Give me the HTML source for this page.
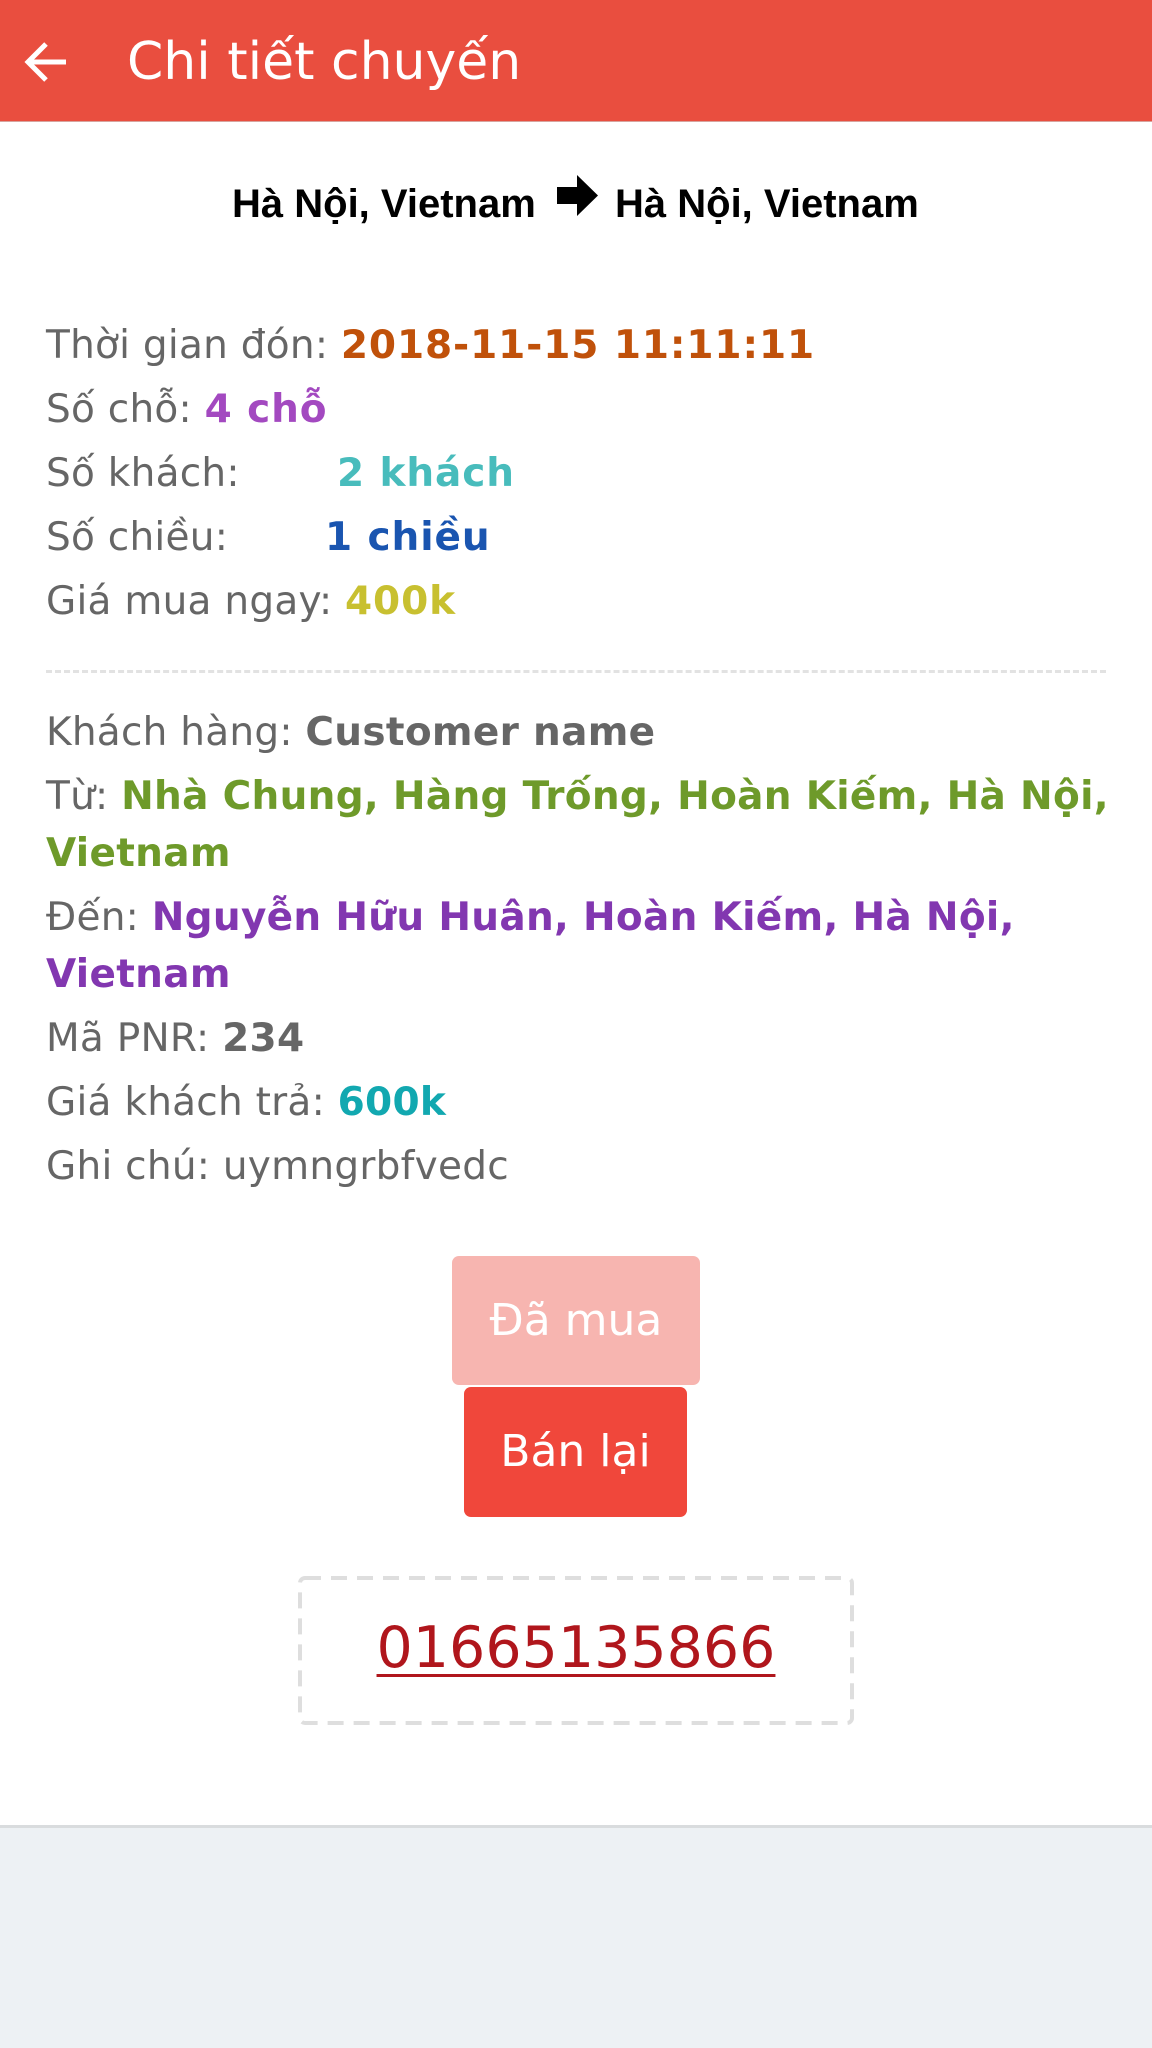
<!DOCTYPE html>
<html><head><meta charset="utf-8"><style>
*{margin:0;padding:0;box-sizing:border-box}
body{width:1152px;height:2048px;background:#edf1f4;position:relative;overflow:hidden;font-family:"DejaVu Sans","Liberation Sans",sans-serif}
.hdr{position:absolute;left:0;top:0;width:1152px;height:122px;background:#e94e3f;border-bottom:1px solid #d7a49e}
.hdr .t{position:absolute;left:127px;top:27px;font-size:52px;line-height:70px;color:#fff;white-space:nowrap}
.main{position:absolute;left:0;top:122px;width:1152px;height:1706px;background:#fff;border-bottom:3px solid #d9dcde}
.route{position:absolute;left:0;top:182px;width:1152px;font-family:"Liberation Sans",Arial,sans-serif;font-weight:bold;font-size:40px;color:#000;white-space:nowrap}
.blk{position:absolute;left:46px;width:1090px;font-size:39px;line-height:57px;color:#666;letter-spacing:0.25px}
.blk p{margin:0 0 7px;white-space:normal}
b{font-weight:bold;letter-spacing:0.9px}
.b2 b{letter-spacing:0.3px}
.dash{position:absolute;left:46px;top:670px;width:1060px;border-top:3px dashed #e2e2e2}
.btn{position:absolute;border-radius:7px;color:#fff;font-size:44px;text-align:center}
.phone{position:absolute;left:0;top:1615px;width:1152px;text-align:center;font-size:57px;color:#b0161c;text-decoration:underline;text-decoration-thickness:3px;text-underline-offset:7px}
</style></head><body>
<div class="main"></div>
<div class="hdr">
<svg style="position:absolute;left:22px;top:40px" width="48" height="44" viewBox="0 0 48 44"><path d="M44 22H6M24 4L6 22l18 18" stroke="#fff" stroke-width="5" fill="none"/></svg>
<div class="t">Chi tiết chuyến</div>
</div>
<div class="route"><span style="position:absolute;left:232px;top:0">Hà Nội, Vietnam</span>
<svg style="position:absolute;left:557px;top:-7px" width="42" height="42" viewBox="0 0 42 42"><path d="M0 12H20V0L41 20.5L20 41V29H0Z" fill="#000"/></svg>
<span style="position:absolute;left:615px;top:0">Hà Nội, Vietnam</span></div>

<div class="blk" style="top:317px">
<p>Thời gian đón: <b style="color:#c0510a">2018-11-15 11:11:11</b></p>
<p>Số chỗ: <b style="color:#a349c0">4 chỗ</b></p>
<p>Số khách:<b style="color:#48bcbc;position:absolute;left:291px">2 khách</b></p>
<p>Số chiều:<b style="color:#1a55b0;position:absolute;left:279px">1 chiều</b></p>
<p>Giá mua ngay: <b style="color:#c8c030">400k</b></p>
</div>
<div class="dash"></div>
<div class="blk b2" style="top:704px">
<p>Khách hàng: <b>Customer name</b></p>
<p>Từ: <b style="color:#6e9a2a">Nhà Chung, Hàng Trống, Hoàn Kiếm, Hà Nội, Vietnam</b></p>
<p>Đến: <b style="color:#8237b0">Nguyễn Hữu Huân, Hoàn Kiếm, Hà Nội, Vietnam</b></p>
<p>Mã PNR: <b>234</b></p>
<p>Giá khách trả: <b style="color:#12a8b0">600k</b></p>
<p>Ghi chú: uymngrbfvedc</p>
</div>
<div class="btn" style="left:452px;top:1256px;width:248px;height:129px;line-height:129px;background:#f7b5b0">Đã mua</div>
<div class="btn" style="left:464px;top:1387px;width:223px;height:130px;line-height:130px;background:#f0473b">Bán lại</div>
<svg style="position:absolute;left:298px;top:1576px" width="556" height="149"><rect x="2" y="2" width="552" height="145" rx="5" fill="none" stroke="#dedede" stroke-width="4" stroke-dasharray="16 10"/></svg>
<div class="phone">01665135866</div>
</body></html>
